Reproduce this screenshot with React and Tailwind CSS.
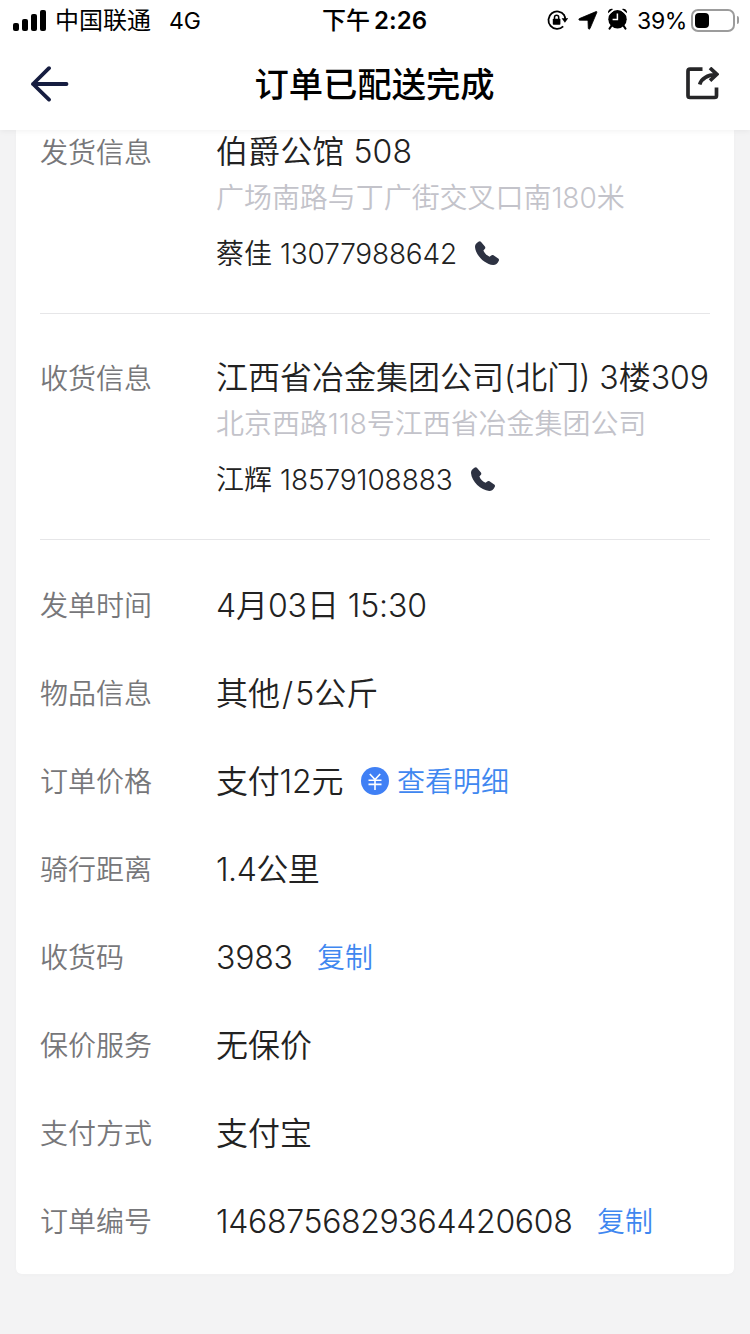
import React from "react";

const Phone = () => (
  <svg className="h-6 w-6 shrink-0" viewBox="0 0 24 24" fill="#2d3242">
    <path d="M3.4 0.7 C4.4 0 5.4 0 6.1 0.9 L9.9 5.6 C10.5 6.4 10.4 7.2 9.7 7.9 L8.4 9.4 C9.3 11.9 11.9 14.6 14.6 15.8 L16.2 14.5 C16.9 13.9 17.7 13.8 18.5 14.3 L23.2 17.6 C24.1 18.2 24.2 19.1 23.7 20 C22.4 22.6 20.9 24 18.2 24 C10 23.4 0.6 14.5 0 6.1 C-0.1 3.4 1.6 1.9 3.4 0.7 Z" />
  </svg>
);

const Yen = () => (
  <svg className="ml-[18px] h-7 w-7 shrink-0 -translate-y-px" viewBox="0 0 28 28" fill="none">
    <circle cx="14" cy="14" r="14" fill="#4080f5" />
    <path d="M8.8 7 L14 12.6 L19.2 7 M7.5 13.2 H20.5 M7.5 17.4 H20.5 M14 13 V23" stroke="#fff" strokeWidth="1.6" />
  </svg>
);

function StatusBar() {
  return (
    <div className="flex h-10 items-center text-2xl leading-10 text-black">
      <div className="flex w-[322px] items-center pl-[13px]">
        <div className="flex h-[21px] items-end gap-[3px]">
          <i className="h-2 w-1.5 rounded-[2px] bg-black" />
          <i className="h-3 w-1.5 rounded-[2px] bg-black" />
          <i className="h-[17px] w-1.5 rounded-[2px] bg-black" />
          <i className="h-[21px] w-1.5 rounded-[2px] bg-black" />
        </div>
        <span className="ml-[9px] h-10 pt-px">中国联通</span>
        <span className="ml-[18px] h-10 pt-px text-[23px]">4G</span>
      </div>
      <div className="flex w-[225px] items-center font-medium">
        <span className="h-10 pt-px">下午</span>
        <span className="ml-1 h-10 pt-px text-[24px] font-semibold tracking-[0.1px]">2:26</span>
      </div>
      <div className="flex items-center">
        <svg className="h-5 w-[21px]" viewBox="0 0 21 20" fill="none">
          <path d="M17.3 5.2 A8.7 8.7 0 1 0 16.2 16.4" stroke="#000" strokeWidth="1.8" />
          <path d="M17 5 Q18.1 6.6 18.1 9" stroke="#000" strokeWidth="1.8" />
          <path d="M14.6 8.2 H21.2 L17.9 12.8 Z" fill="#000" />
          <rect x="5.8" y="8.8" width="7.6" height="6" rx="0.8" fill="#000" />
          <path d="M7.5 9.5 V7.4 a2.1 2.1 0 0 1 4.2 0 V9.5" stroke="#000" strokeWidth="1.5" />
        </svg>
        <svg className="ml-[10px] h-[19px] w-[20px]" viewBox="0 0 20 19">
          <path d="M18 0.6 Q19.2 0.3 18.8 1.5 L12 17.6 Q11.1 19 10.3 17.5 L10 10.3 Q9.9 9.3 8.9 9.3 L1.5 9.2 Q0 8.5 1.4 7.6 Z" fill="#000" stroke="#000" strokeWidth="0.8" strokeLinejoin="round" />
        </svg>
        <svg className="ml-[9px] h-[22px] w-[21px] -translate-y-px" viewBox="0 0 21 22" fill="none">
          <circle cx="10.5" cy="11.3" r="9.2" fill="#000" />
          <path d="M1 5.2 A3.8 3.8 0 0 1 6.2 1 Z M14.8 1 A3.8 3.8 0 0 1 20 5.2 Z" fill="#000" />
          <path d="M1.7 6.5 L7.3 1.9 M13.7 1.9 L19.3 6.5" stroke="#fff" strokeWidth="0.9" />
          <path d="M4.3 18 L2.6 20.5 M16.7 18 L18.4 20.5" stroke="#000" strokeWidth="2.2" strokeLinecap="round" />
          <path d="M10.4 5.5 V11.5 H5.6" stroke="#fff" strokeWidth="1.5" />
        </svg>
        <span className="ml-[9px] h-10 w-[50px] pt-px text-[23px] tracking-[-0.3px]">39%</span>
        <div className="ml-[4px] h-[23px] w-[44px] rounded-[7px] border-2 border-[#9c9c9c] p-[2px]">
          <div className="h-[15px] w-[14px] rounded-[4px] bg-black" />
        </div>
        <i className="ml-[2px] h-2 w-[2px] rounded-r-full bg-[#9c9c9c]" />
      </div>
    </div>
  );
}

function NavBar() {
  return (
    <div className="flex h-[90px] items-center pr-[31px] pl-[30px]">
      <svg className="h-9 w-[39px] -translate-y-px" viewBox="0 0 39 36" fill="none" stroke="#161d40" strokeWidth="3.8" strokeLinecap="round" strokeLinejoin="round">
        <path d="M36.5 18 H3 M19 2.2 L3 18 L19 33.6" />
      </svg>
      <h1 className="h-[90px] flex-1 pr-[6px] text-center text-[34.3px] leading-[90px] font-medium text-black">订单已配送完成</h1>
      <svg className="h-[33px] w-[33px] -translate-y-[2px]" viewBox="0 0 33 33" fill="none" stroke="#262628" strokeWidth="3.7">
        <path d="M16.5 2.2 H4 Q2 2.2 2 4.2 V28.5 Q2 30.5 4 30.5 H28.5 Q30.5 30.5 30.5 28.5 V20.5" />
        <path d="M13.7 17.5 C15.5 11.5 20 8 30.5 7.3 M24 1 L30.8 7.3 L24 13.6" />
      </svg>
    </div>
  );
}

function Contact({ label, place, address, name, phone, className, placeClass, addressClass, phoneClass }) {
  return (
    <section className={"flex h-[184px] border-b border-[#e6e6e8] text-[#222] " + className}>
      <div className="h-[42px] w-44 text-[28px] leading-[46px] text-[#77777a]">{label}</div>
      <div className="whitespace-nowrap">
        <div className={"h-[42px] text-[32px] leading-[44px] " + placeClass}>{place}</div>
        <div className={"h-[50px] text-[28px] leading-[52px] text-[#c3c3ca] " + addressClass}>{address}</div>
        <div className="flex h-[62px] items-center text-[28px] leading-[62px]">
          <span className="mr-2 h-[62px] pt-px">{name}</span>
          <span className={"h-[62px] pt-px " + phoneClass}>{phone}</span>
          <span className="ml-[18px]"><Phone /></span>
        </div>
      </div>
    </section>
  );
}

function Row({ label, children }) {
  return (
    <div className="flex h-[88px] items-center text-[32px] leading-[88px] whitespace-nowrap text-[#222]">
      <div className="w-44 text-[28px] text-[#77777a]">{label}</div>
      {children}
    </div>
  );
}

const Link = ({ className, children }) => (
  <a className={"text-[28px] text-[#3f87f0] " + className}>{children}</a>
);

export default function App() {
  return (
    <div className="flex h-[1334px] w-[750px] flex-col overflow-hidden bg-[#f3f3f4] font-['Inter','Noto_Sans_CJK_SC',sans-serif]">
      <header className="relative h-[130px] shrink-0 bg-white shadow-[0_1px_6px_rgba(0,0,0,0.06)]">
        <StatusBar />
        <NavBar />
      </header>
      <main className="mx-4 h-[1144px] rounded-b-[6px] bg-white px-6 font-[350] shadow-[0_1px_4px_rgba(0,0,0,0.02)]">
        <Contact className="" label="发货信息" place="伯爵公馆 508" address="广场南路与丁广街交叉口南180米" name="蔡佳" phone="13077988642" placeClass="tracking-[0.1px]" addressClass="tracking-[-0.05px]" phoneClass="tracking-[-0.2px]" />
        <Contact className="mt-[42px]" label="收货信息" place="江西省冶金集团公司(北门) 3楼309" address="北京西路118号江西省冶金集团公司" name="江辉" phone="18579108883" placeClass="" addressClass="tracking-[-0.05px]" phoneClass="tracking-[-0.1px]" />
        <div className="pt-[22px]">
          <Row label="发单时间"><span className="tracking-[-0.1px]">4月03日 15:30</span></Row>
          <Row label="物品信息"><span>其他<span className="mx-0.5">/</span>5公斤</span></Row>
          <Row label="订单价格"><span className="w-[127px] tracking-[-0.2px]">支付12元</span><Yen /><Link className="ml-2">查看明细</Link></Row>
          <Row label="骑行距离"><span className="tracking-[-0.5px]">1.4公里</span></Row>
          <Row label="收货码"><span className="w-[77px] tracking-[-0.2px]">3983</span><Link className="ml-6">复制</Link></Row>
          <Row label="保价服务"><span>无保价</span></Row>
          <Row label="支付方式"><span>支付宝</span></Row>
          <Row label="订单编号"><span className="w-[357px] tracking-[-0.33px]">1468756829364420608</span><Link className="ml-6">复制</Link></Row>
        </div>
      </main>
    </div>
  );
}
